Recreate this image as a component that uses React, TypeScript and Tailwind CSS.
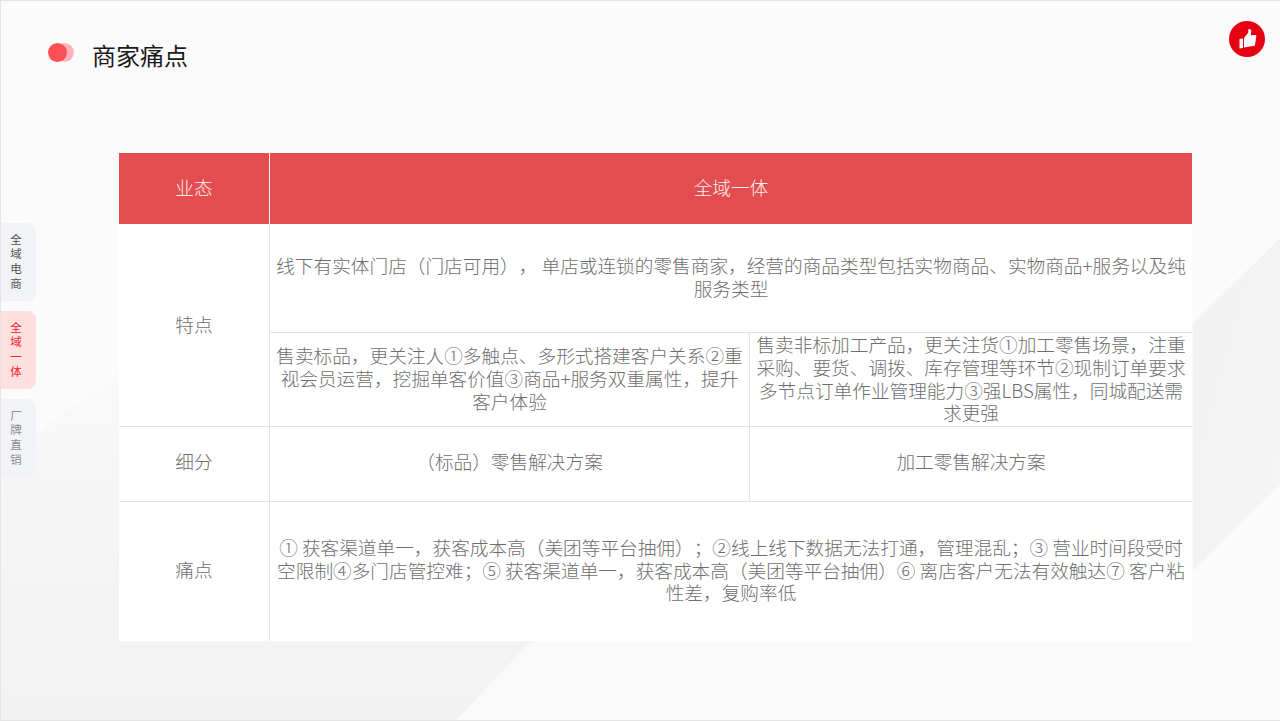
import React from "react";

const cell = "flex items-center justify-center text-center border-[#e4e4e4]";

const Tab = ({ chars, active, dim }: { chars: string[]; active?: boolean; dim?: boolean }) => (
  <div
    className={`flex flex-col items-center justify-center w-[35px] h-[78px] pr-[5px] pb-[2px] rounded-r-lg rounded-l-none text-[11.5px] leading-[14.6px] ${
      active ? "bg-[#ffe0de] text-[#f5222d]" : dim ? "bg-[#f1f3f7] text-[#8c8c8c]" : "bg-[#f1f3f7] text-[#555555]"
    }`}
  >
    {chars.map((c) => (
      <span key={c}>{c}</span>
    ))}
  </div>
);

export default function App() {
  return (
    <div
      className="relative w-[1280px] h-[721px] overflow-hidden bg-[#fbfbfc] border-t border-l border-b border-[#e4e4e4] text-[#6e6e6e] [text-spacing-trim:space-all]"
      style={{ fontFamily: '"Noto Sans CJK SC", "Noto Sans", sans-serif' }}
    >
      {/* background facets */}
      <svg className="absolute inset-0" width="1280" height="721" viewBox="0 0 1280 721">
        <defs>
          <linearGradient id="left" x1="0" y1="0" x2="0" y2="1">
            <stop offset="0" stopColor="#fafafa" />
            <stop offset="0.3" stopColor="#f6f6f6" />
            <stop offset="1" stopColor="#f2f2f2" />
          </linearGradient>
          <linearGradient id="right" x1="0" y1="0" x2="1" y2="1">
            <stop offset="0" stopColor="#f1f1f1" />
            <stop offset="1" stopColor="#f5f5f5" />
          </linearGradient>
        </defs>
        <rect x="0" y="640" width="1280" height="81" fill="#fafafa" />
        <polygon points="0,460 125,365 530,640 453,721 0,721" fill="url(#left)" />
        <polygon points="1192,323 1280,236 1280,483 1192,570" fill="url(#right)" />
      </svg>

      <div className="relative flex flex-col">
        {/* header */}
        <div className="flex justify-between h-[152px] pl-[47px] pr-[15px]">
          <div className="flex items-start pt-[42px]">
            <div className="relative w-[26px] h-[19px]">
              <div className="absolute right-0 top-0 w-[19px] h-[19px] rounded-full bg-[#ffb3bb]" />
              <div className="absolute left-0 top-0 w-[19px] h-[19px] rounded-full bg-[#ff5056]" />
            </div>
            <h1 className="ml-[18px] -mt-[3px] text-[24px] leading-[30px] font-normal text-[#1a1a1a]">商家痛点</h1>
          </div>
          <div className="pt-[20px]">
            <svg width="36" height="36" viewBox="0 0 36 36">
              <circle cx="18" cy="18" r="18" fill="#e60012" />
              <path d="M10.5 18 L14 17.5 L14 27 L10.5 27.5 Z" fill="#fff" />
              <path d="M15 17 L19 12 L19.5 8 C21.5 7.6 22.6 9 22.2 11 L21.7 14.5 L26 14 C27 13.9 27.5 14.6 27.3 15.4 L26 23.5 C25.8 24.6 25.2 25 24.2 25.1 L15 26.6 Z" fill="#fff" />
            </svg>
          </div>
        </div>

        <div className="flex">
          {/* side tabs */}
          <div className="w-[118px] flex flex-col gap-[10px] pt-[70px]">
            <Tab chars={["全", "域", "电", "商"]} />
            <Tab chars={["全", "域", "一", "体"]} active />
            <Tab chars={["厂", "牌", "直", "销"]} dim />
          </div>

          {/* table */}
          <div className="w-[1073px] grid grid-cols-[150px_480px_443px] grid-rows-[71px_108px_94px_75px_140px] bg-white text-[18.67px] leading-[22.7px] font-light">
            <div className={`${cell} pb-[2px] bg-[#e34d4f] text-[#fdf0f0]`}>业态</div>
            <div className={`${cell} pb-[2px] col-span-2 bg-[#e34d4f] text-[#fdf0f0] border-l border-white`}>全域一体</div>

            <div className={`${cell} pb-[2px] row-span-2`}>特点</div>
            <div className={`${cell} pb-[2px] col-span-2 border-l px-1`}>
              线下有实体门店（门店可用）， 单店或连锁的零售商家，经营的商品类型包括实物商品、实物商品+服务以及纯服务类型
            </div>
            <div className={`${cell} pb-[2px] border-l border-t px-1`}>
              售卖标品，更关注人①多触点、多形式搭建客户关系②重视会员运营，挖掘单客价值③商品+服务双重属性，提升客户体验
            </div>
            <div className={`${cell} pb-[2px] border-l border-t px-1`}>
              售卖非标加工产品，更关注货①加工零售场景，注重采购、要货、调拨、库存管理等环节②现制订单要求多节点订单作业管理能力③强LBS属性，同城配送需求更强
            </div>

            <div className={`${cell} pb-[5px] border-t`}>细分</div>
            <div className={`${cell} pb-[5px] border-t border-l`}>（标品）零售解决方案</div>
            <div className={`${cell} pb-[5px] border-t border-l`}>加工零售解决方案</div>

            <div className={`${cell} pb-[4px] border-t`}>痛点</div>
            <div className={`${cell} pb-[3px] col-span-2 border-t border-l px-1`}>
              ① 获客渠道单一，获客成本高（美团等平台抽佣）；②线上线下数据无法打通，管理混乱；③ 营业时间段受时空限制④多门店管控难；⑤ 获客渠道单一，获客成本高（美团等平台抽佣）⑥ 离店客户无法有效触达⑦ 客户粘性差，复购率低
            </div>
          </div>
        </div>
      </div>
    </div>
  );
}
